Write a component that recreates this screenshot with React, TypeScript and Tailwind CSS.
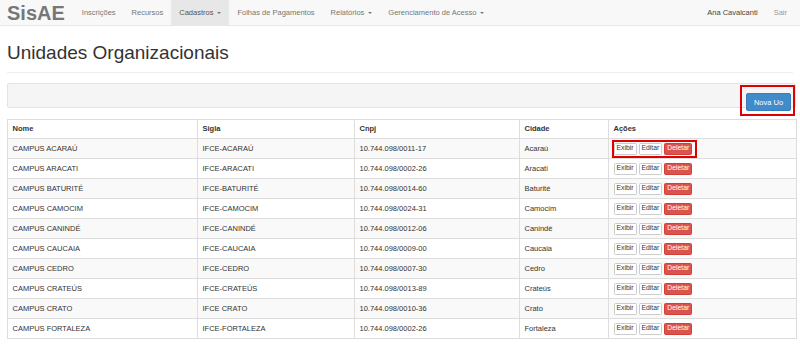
import React from 'react'

// SisAE — Unidades Organizacionais

const UNIDADES = [
  { nome: 'CAMPUS ACARAÚ', sigla: 'IFCE-ACARAÚ', cnpj: '10.744.098/0011-17', cidade: 'Acaraú' },
  { nome: 'CAMPUS ARACATI', sigla: 'IFCE-ARACATI', cnpj: '10.744.098/0002-26', cidade: 'Aracati' },
  { nome: 'CAMPUS BATURITÉ', sigla: 'IFCE-BATURITÉ', cnpj: '10.744.098/0014-60', cidade: 'Baturité' },
  { nome: 'CAMPUS CAMOCIM', sigla: 'IFCE-CAMOCIM', cnpj: '10.744.098/0024-31', cidade: 'Camocim' },
  { nome: 'CAMPUS CANINDÉ', sigla: 'IFCE-CANINDÉ', cnpj: '10.744.098/0012-06', cidade: 'Canindé' },
  { nome: 'CAMPUS CAUCAIA', sigla: 'IFCE-CAUCAIA', cnpj: '10.744.098/0009-00', cidade: 'Caucaia' },
  { nome: 'CAMPUS CEDRO', sigla: 'IFCE-CEDRO', cnpj: '10.744.098/0007-30', cidade: 'Cedro' },
  { nome: 'CAMPUS CRATEÚS', sigla: 'IFCE-CRATEÚS', cnpj: '10.744.098/0013-89', cidade: 'Crateús' },
  { nome: 'CAMPUS CRATO', sigla: 'IFCE CRATO', cnpj: '10.744.098/0010-36', cidade: 'Crato' },
  { nome: 'CAMPUS FORTALEZA', sigla: 'IFCE-FORTALEZA', cnpj: '10.744.098/0002-26', cidade: 'Fortaleza' },
]

const ITENS_NAV = [
  { label: 'Inscrições' },
  { label: 'Recursos' },
  { label: 'Cadastros', dropdown: true, ativo: true },
  { label: 'Folhas de Pagamentos' },
  { label: 'Relatórios', dropdown: true },
  { label: 'Gerenciamento de Acesso', dropdown: true },
]

function Caret() {
  return (
    <span className="inline-block w-0 h-0 ml-[4px] border-t-[2px] border-x-[2px] border-x-transparent border-t-[#777] align-middle" />
  )
}

function Acoes({ destaque }: { destaque?: boolean }) {
  return (
    <div className="relative inline-flex gap-[2px]">
      <button className="h-[12px] px-[2px] bg-white border border-[#ccc] rounded-[1.5px] text-[6.8px] leading-none text-[#333]">Exibir</button>
      <button className="h-[12px] px-[2px] bg-white border border-[#ccc] rounded-[1.5px] text-[6.8px] leading-none text-[#333]">Editar</button>
      <button className="h-[12px] px-[2px] bg-[#d9534f] border border-[#d43f3a] rounded-[1.5px] text-[6.8px] leading-none text-white">Deletar</button>
      {destaque && (
        <span className="absolute -left-[2px] -right-[5px] -top-[3px] -bottom-[3px] border-[2px] border-[#e00000] pointer-events-none" />
      )}
    </div>
  )
}

export default function App() {
  return (
    <div className="w-[800px] h-[346px] overflow-hidden bg-white text-[#333]" style={{ fontFamily: '"Liberation Sans", Arial, sans-serif' }}>
      {/* navbar */}
      <div className="h-[26px] flex items-stretch bg-[#f8f8f8] border-b border-[#e7e7e7] pl-[7px] pr-[5px]">
        <div className="flex items-center pr-[9px] text-[20px] font-bold text-[#777] leading-none">SisAE</div>
        {ITENS_NAV.map((item) => (
          <div key={item.label}
            className={`flex items-center px-[8px] text-[7.5px] ${item.ativo ? 'bg-[#e7e7e7] text-[#555]' : 'text-[#777]'}`}>
            {item.label}
            {item.dropdown && <Caret />}
          </div>
        ))}
        <div className="flex-1" />
        <div className="flex items-center px-[8px] text-[7.5px] text-[#444]">Ana Cavalcanti</div>
        <div className="flex items-center px-[8px] text-[7.5px] text-[#999]">Sair</div>
      </div>

      <div className="px-[7px] pr-[4px]">
        <h1 className="mt-[16px] text-[19px] leading-[21px] font-normal text-[#333]">Unidades Organizacionais</h1>
        <hr className="mt-[9px] border-t border-[#eee] mr-[3px]" />

        <div className="mt-[10px] h-[25px] flex items-start justify-end pt-[3.5px] pr-[4px] bg-[#f5f5f5] border border-[#e3e3e3] rounded-[2px]">
          <div className="relative">
            <button className="w-[45px] h-[18px] bg-[#428bca] border border-[#357ebd] rounded-[2px] text-white text-[7.5px] leading-none">Nova Uo</button>
            <span className="absolute -left-[6px] -right-[4px] -top-[3px] -bottom-[4px] border-[2.5px] border-[#e00000] pointer-events-none" />
          </div>
        </div>

        <table className="mt-[11px] w-[789px] border-collapse border border-[#ddd] text-[7.5px] table-fixed">
          <colgroup>
            <col className="w-[190px]" />
            <col className="w-[157px]" />
            <col className="w-[165px]" />
            <col className="w-[89px]" />
            <col className="w-[188px]" />
          </colgroup>
          <thead>
            <tr className="h-[19px]">
              {['Nome', 'Sigla', 'Cnpj', 'Cidade', 'Ações'].map((h) => (
                <th key={h} className="border border-[#ddd] px-[4.5px] text-left font-bold align-middle">{h}</th>
              ))}
            </tr>
          </thead>
          <tbody>
            {UNIDADES.map((u, i) => (
              <tr key={u.nome} className={`h-[20px] ${i % 2 === 0 ? 'bg-[#f9f9f9]' : 'bg-white'}`}>
                <td className="border border-[#ddd] px-[4.5px] align-middle">{u.nome}</td>
                <td className="border border-[#ddd] px-[4.5px] align-middle">{u.sigla}</td>
                <td className="border border-[#ddd] px-[4.5px] align-middle">{u.cnpj}</td>
                <td className="border border-[#ddd] px-[4.5px] align-middle">{u.cidade}</td>
                <td className="border border-[#ddd] px-[4.5px] align-middle">
                  <div className="flex items-center h-[19px]">
                    <Acoes destaque={i === 0} />
                  </div>
                </td>
              </tr>
            ))}
          </tbody>
        </table>
      </div>
    </div>
  )
}
